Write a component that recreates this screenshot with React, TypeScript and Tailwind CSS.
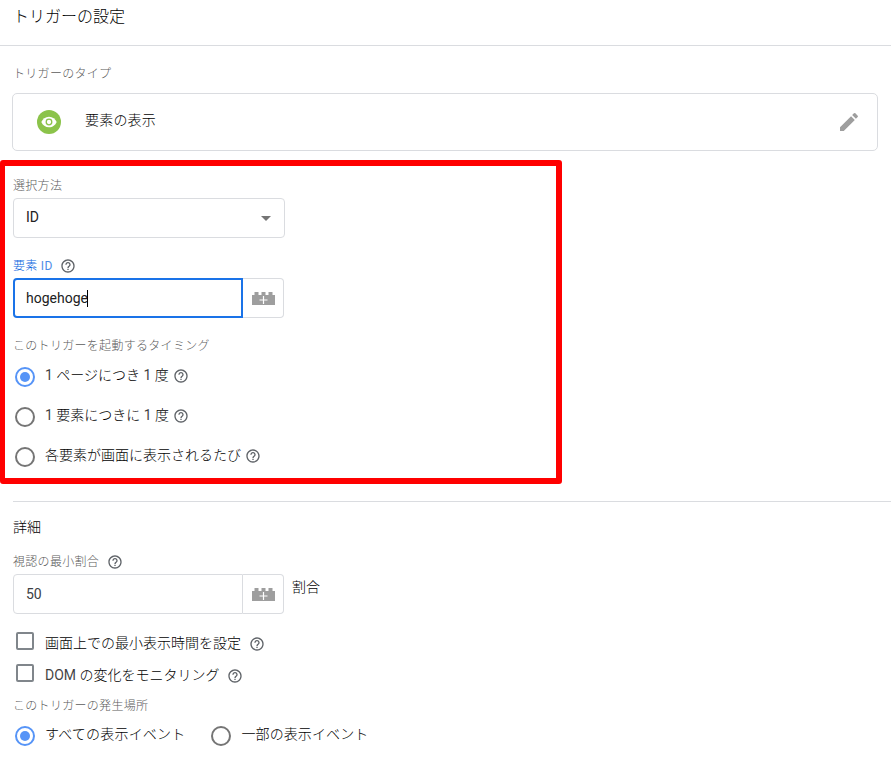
import type { ReactNode } from "react";
import { clsx } from "clsx";

function HelpIcon({ className }: { className?: string }) {
  return (
    <svg
      viewBox="0 0 24 24"
      className={clsx("h-4 w-4 shrink-0 fill-[#5f6368]", className)}
      aria-hidden
    >
      <path d="M11 18h2v-2h-2v2zm1-16C6.48 2 2 6.48 2 12s4.48 10 10 10 10-4.48 10-10S17.52 2 12 2zm0 18c-4.41 0-8-3.59-8-8s3.59-8 8-8 8 3.59 8 8-3.59 8-8 8zm0-14c-2.21 0-4 1.79-4 4h2c0-1.1.9-2 2-2s2 .9 2 2c0 2-3 1.75-3 5h2c0-2.25 3-2.5 3-5 0-2.21-1.79-4-4-4z" />
    </svg>
  );
}

function VariableIcon() {
  return (
    <svg viewBox="0 0 23 14" className="mt-px h-3.5 w-[23px]" aria-hidden>
      <path
        d="M0 3h2.5V0h4v3h3V0h4v3h3V0h4v3H23v10H0z"
        className="fill-[#9e9e9e]"
      />
      <path d="M11.5 4v8M7.5 8h8" className="stroke-white" strokeWidth="1.2" />
    </svg>
  );
}

function Label({
  children,
  active,
  className,
}: {
  children: ReactNode;
  active?: boolean;
  className?: string;
}) {
  return (
    <div
      className={clsx(
        "flex h-4 items-center text-[12px] leading-4 tracking-[0.3px]",
        active ? "text-[#0b66e0]" : "text-[#5c5c5c]",
        className,
      )}
    >
      {children}
    </div>
  );
}

// Latin runs sit one weight above the light Japanese text
function Latin({ children }: { children: ReactNode }) {
  return <span className="font-normal opacity-75">{children}</span>;
}

function Radio({
  children,
  checked,
  help,
  className,
}: {
  children: ReactNode;
  checked?: boolean;
  help?: boolean;
  className?: string;
}) {
  return (
    <div className={clsx("flex h-5 items-center", className)}>
      <span
        className={clsx(
          "flex h-5 w-5 shrink-0 items-center justify-center rounded-full border-2",
          checked ? "border-[#5694f7]" : "border-[#757575]",
        )}
      >
        {checked && <span className="h-2.5 w-2.5 rounded-full bg-[#5694f7]" />}
      </span>
      <span className="mb-1 ml-2.5 leading-5">{children}</span>
      {help && <HelpIcon className="mb-0.5 ml-1" />}
    </div>
  );
}

function Checkbox({ children }: { children: ReactNode }) {
  return (
    <div className="flex h-[18px] items-center">
      <span className="h-[18px] w-[18px] shrink-0 rounded-xs border-2 border-[#80868b]" />
      <span className="mt-1 ml-[11px] leading-5">{children}</span>
      <HelpIcon className="mt-1.5 ml-[7.5px]" />
    </div>
  );
}

function VariableInput({ value, focused }: { value: string; focused?: boolean }) {
  return (
    <div className="flex h-10 w-[271px] rounded-[4px] font-normal">
      <div
        className={clsx(
          "flex w-[230px] items-center rounded-l-[4px]",
          focused
            ? "border-2 border-[#1a73e8] pl-[11px]"
            : "border border-[#dadce0] pl-3 text-[#3c4043]",
        )}
      >
        <span>{value}</span>
        {focused && <span className="-ml-px h-[17px] w-px bg-black" />}
      </div>
      <div className="flex w-[41px] items-center justify-center rounded-r-[4px] border border-l-0 border-[#dadce0]">
        <VariableIcon />
      </div>
    </div>
  );
}

export default function App() {
  return (
    <main className="h-[775px] w-[891px] overflow-hidden bg-white font-[Roboto,'Noto_Sans_CJK_JP',sans-serif] text-[14px] leading-5 font-light text-black">
      <header className="h-[46px] border-b border-[#dadce0] pt-[5px] pl-[13px]">
        <h1 className="text-base leading-6 font-light">トリガーの設定</h1>
      </header>

      <section className="pt-5 pr-[13px] pl-3">
        <Label className="pl-px">トリガーのタイプ</Label>
        <div className="mt-[11px] flex h-[58px] items-center rounded-[5px] border border-[#dadce0] pr-4 pl-6">
          <svg viewBox="0 0 24 24" className="h-6 w-6" aria-hidden>
            <circle cx="12" cy="12" r="12" className="fill-[#8bc34a]" />
            <path
              d="M12 6.7C8.5 6.7 5.6 8.9 4.3 12c1.3 3.1 4.2 5.3 7.7 5.3s6.4-2.2 7.7-5.3C18.4 8.9 15.5 6.7 12 6.7z"
              className="fill-white"
            />
            <circle
              cx="12"
              cy="12"
              r="2.8"
              className="fill-white stroke-[#8bc34a]"
              strokeWidth="1.3"
            />
          </svg>
          <span className="mb-1 ml-6 tracking-[0.2px]">要素の表示</span>
          <svg
            viewBox="0 0 24 24"
            className="ml-auto h-6 w-6 fill-[#9e9e9e]"
            aria-hidden
          >
            <path d="M3 17.25V21h3.75L17.81 9.94l-3.75-3.75L3 17.25zM20.71 7.04c.39-.39.39-1.02 0-1.41l-2.34-2.34a.9959.9959 0 0 0-1.41 0l-1.83 1.83 3.75 3.75 1.83-1.83z" />
          </svg>
        </div>
      </section>

      <section className="mt-[9px] h-[324px] w-[562px] rounded-[3px] border-6 border-l-5 border-[#ff0000] pt-3 pl-2">
        <Label>選択方法</Label>
        <div className="mt-1 flex h-10 w-[272px] items-center justify-between rounded-[4px] border border-[#dadce0] pr-[13px] pl-3">
          <span className="mb-0.5 font-normal text-[#212121]">ID</span>
          <span className="h-0 w-0 border-x-5 border-t-5 border-x-transparent border-t-[#757575]" />
        </div>

        <Label active className="mt-5">
          <span>
            要素 <Latin>ID</Latin>
          </span>
          <HelpIcon className="ml-[7px]" />
        </Label>
        <div className="mt-1 text-[#212121]">
          <VariableInput value="hogehoge" focused />
        </div>

        <Label className="mt-5">このトリガーを起動するタイミング</Label>
        <div className="mt-[13px] ml-0.5 flex flex-col gap-5">
          <Radio checked help>
            <Latin>1</Latin> ページにつき <Latin>1</Latin> 度
          </Radio>
          <Radio help>
            <Latin>1</Latin> 要素につきに <Latin>1</Latin> 度
          </Radio>
          <Radio help>各要素が画面に表示されるたび</Radio>
        </div>
      </section>

      <section className="mt-[17px] ml-[13px] border-t border-[#dadce0] pt-[15px]">
        <h2 className="leading-5 font-light">詳細</h2>
        <Label className="mt-[17px]">
          視認の最小割合
          <HelpIcon className="ml-[7.5px]" />
        </Label>
        <div className="mt-1 flex">
          <VariableInput value="50" />
          <span className="mt-[3px] ml-2">割合</span>
        </div>

        <div className="mt-[18px] ml-[3px] flex flex-col gap-3.5">
          <Checkbox>画面上での最小表示時間を設定</Checkbox>
          <Checkbox>
            <Latin>DOM</Latin> の変化をモニタリング
          </Checkbox>
        </div>

        <Label className="mt-4">このトリガーの発生場所</Label>
        <div className="mt-3 ml-0.5 flex gap-[26px]">
          <Radio checked className="tracking-[0.2px]">
            すべての表示イベント
          </Radio>
          <Radio className="tracking-[0.1px]">一部の表示イベント</Radio>
        </div>
      </section>
    </main>
  );
}
